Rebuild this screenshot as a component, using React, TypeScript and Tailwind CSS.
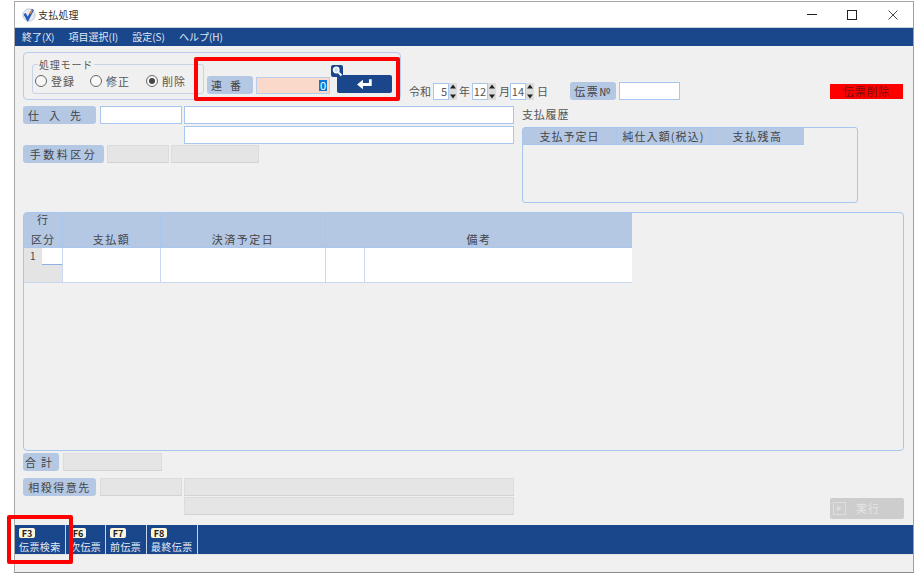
import React from "react";

const font = { fontFamily: '"Noto Sans CJK JP", "Liberation Sans", sans-serif' };

function Label({ children, className = "" }: { children: React.ReactNode; className?: string }) {
  return (
    <div className={`flex h-[18px] items-center justify-center rounded-[3px] bg-[#b4c8e4] text-[11px] leading-none text-[#444] ${className}`}>
      {children}
    </div>
  );
}

function Input({ className = "", disabled = false }: { className?: string; disabled?: boolean }) {
  return (
    <div
      className={`h-[18px] border ${
        disabled ? "border-[#dcdcdc] border-b-[#d2d2d2] bg-[#e5e5e5]" : "border-[#a9c6ee] bg-white"
      } ${className}`}
    />
  );
}

function Radio({ label, checked = false, className = "" }: { label: string; checked?: boolean; className?: string }) {
  return (
    <div className={`flex items-center gap-[4px] text-[11px] leading-none tracking-[1px] text-[#555] ${className}`}>
      <span className="flex h-[12px] w-[12px] items-center justify-center rounded-full border border-[#666] bg-[#f8f8f8]">
        {checked && <span className="h-[6px] w-[6px] rounded-full bg-[#444]" />}
      </span>
      {label}
    </div>
  );
}

function Spin() {
  return (
    <div className="flex h-[17px] w-[8px] flex-col bg-[#dcdcdc]">
      <svg viewBox="0 0 8 8" className="h-[8px] w-[8px]"><path d="M4 1.5 7 5.5H1Z" fill="#222" /></svg>
      <svg viewBox="0 0 8 8" className="mt-[1px] h-[8px] w-[8px]"><path d="M4 6.5 7 2.5H1Z" fill="#222" /></svg>
    </div>
  );
}

function NumBox({ value, className = "" }: { value: string; className?: string }) {
  return (
    <div className={`flex h-[17px] items-center justify-end border border-[#a9c6ee] bg-white pr-[1px] text-[11px] leading-none text-[#555] ${className}`}>
      {value}
    </div>
  );
}

function FKey({ k, label, className = "" }: { k: string; label: string; className?: string }) {
  return (
    <div className={`flex h-full flex-col items-start border-r border-[#c5d3e8] pl-[4px] pt-[3px] ${className}`}>
      <span className="flex h-[10px] w-[16px] items-center justify-center rounded-[2px] bg-[#fdf6dc] text-[9px] font-bold leading-none text-[#222]">
        {k}
      </span>
      <span className="mt-[2px] whitespace-nowrap text-[10px] leading-[13px] tracking-[0.4px] text-[#e6ecf6]">{label}</span>
    </div>
  );
}

export default function App() {
  return (
    <div className="relative h-[581px] w-[921px] overflow-hidden bg-white pl-[14px] pt-[1px]" style={font}>
      <div className="flex h-[572px] w-[900px] flex-col border border-[#a8a8a8] border-b-[#8a8a8a] border-r-[#a0a0a0] bg-[#f0f0f0]">
        {/* Title bar */}
        <div className="flex h-[26px] items-center border-b border-[#c8d0dc] bg-white pl-[7px]">
          <svg viewBox="0 0 16 16" className="h-[14px] w-[14px]">
            <circle cx="8" cy="8" r="7" fill="#e6e8f4" stroke="#b0b4cc" strokeWidth="0.8" />
            <path d="M3 6.5l3.5 6.5L12.5 1.5" fill="none" stroke="#2258b8" strokeWidth="2.8" />
            <path d="M9.5 6.5l2-4.5" stroke="#f09020" strokeWidth="1.6" />
          </svg>
          <span className="ml-[2px] text-[10px] leading-none tracking-[0.2px] text-[#333]">支払処理</span>
          <div className="ml-auto flex items-center pr-[15px]">
            <span className="h-px w-[10px] bg-[#222]" />
            <span className="ml-[30px] h-[10px] w-[10px] border border-[#222]" />
            <svg viewBox="0 0 10 10" className="ml-[31px] h-[10px] w-[10px]">
              <path d="M0.5 0.5 9.5 9.5M9.5 0.5 0.5 9.5" stroke="#333" strokeWidth="0.9" />
            </svg>
          </div>
        </div>
        {/* Menu */}
        <div className="flex h-[18px] items-center gap-[14px] bg-[#1a478c] pl-[7px] text-[10px] leading-none text-[#dfe7f3]">
          <span>終了(X)</span>
          <span>項目選択(I)</span>
          <span>設定(S)</span>
          <span>ヘルプ(H)</span>
        </div>

        {/* Body */}
        <div className="flex min-h-0 flex-1 flex-col pl-[8px] pr-[9px] pt-[6px]">
          {/* Top row */}
          <div className="flex items-end">
            <div className="relative flex h-[48px] w-[378px] shrink-0 items-end rounded-[4px] border border-[#b8cdea] pb-[5px] pl-[8px]">
              <fieldset className="h-[35px] w-[172px] rounded-[3px] border border-[#c8d4e4] pl-[2px]">
                <legend className="ml-[3px] px-[1px] text-[10px] leading-[11px] tracking-[0.8px] text-[#555]">処理モード</legend>
                <div className="mt-[5px] flex">
                  <Radio label="登録" className="w-[55px]" />
                  <Radio label="修正" className="w-[56px]" />
                  <Radio label="削除" checked />
                </div>
              </fieldset>
              <Label className="ml-[3px] h-[17px] w-[46px] tracking-[8px]">連番</Label>
              <div className="ml-[3px] flex h-[17px] w-[74px] items-center justify-end border border-[#b8cdea] bg-[#fad9cb] pr-[2px] text-[11px] leading-none">
                <span className="bg-[#0a78d7] px-px text-white">0</span>
              </div>
              <div className="relative mb-[1px] ml-[7px] flex h-[18px] w-[55px] items-center justify-center rounded-[2px] bg-[#1a478c]">
                <svg viewBox="0 0 16 12" className="h-[13px] w-[17px]">
                  <path d="M13.5 1v5H6" fill="none" stroke="#fff" strokeWidth="2.6" />
                  <path d="M1 6l5.5-4.5v9Z" fill="#fff" />
                </svg>
                <div className="absolute -left-[6px] -top-[10px] flex h-[12px] w-[12px] items-center justify-center rounded-[2px] bg-[#1a478c]">
                  <svg viewBox="0 0 12 12" className="h-[12px] w-[12px]">
                    <circle cx="5.2" cy="5" r="2.8" fill="#cfe0f6" stroke="#fff" strokeWidth="1.3" />
                    <path d="M7.5 7.5 10.5 10.5" stroke="#fff" strokeWidth="1.8" />
                  </svg>
                </div>
              </div>
            </div>

            <div className="flex items-center text-[11px] leading-none text-[#555]">
              <span className="ml-[8px] w-[24px] whitespace-nowrap">令和</span>
              <NumBox value="5" className="w-[16px]" />
              <Spin />
              <span className="ml-[2px] w-[13px]">年</span>
              <NumBox value="12" className="w-[16px]" />
              <Spin />
              <span className="ml-[3px] w-[11px]">月</span>
              <NumBox value="14" className="w-[16px]" />
              <Spin />
              <span className="ml-[3px] w-[12px]">日</span>
              <Label className="ml-[21px] h-[17px] w-[46px] whitespace-nowrap tracking-[1.5px]">伝票№</Label>
              <Input className="ml-[3px] h-[17px] w-[61px]" />
            </div>
            <div className="mb-px ml-auto mr-[1px] flex h-[15px] w-[73px] items-center justify-center bg-[#ff0000] text-[11px] leading-none tracking-[0.8px] text-[#7a1010]">
              伝票削除
            </div>
          </div>

          {/* Supplier + history */}
          <div className="mt-[6px] flex h-[100px]">
            <div className="w-[491px] shrink-0">
              <div className="flex">
                <Label className="w-[73px] tracking-[10px]">仕入先</Label>
                <Input className="ml-[4px] w-[82px]" />
                <Input className="ml-[2px] w-[330px]" />
              </div>
              <div className="mt-[2px] flex pl-[161px]">
                <Input className="w-[330px]" />
              </div>
              <div className="mt-px flex">
                <Label className="w-[81px] tracking-[2.5px]">手数料区分</Label>
                <Input disabled className="ml-[3px] w-[62px]" />
                <Input disabled className="ml-[2px] w-[88px]" />
              </div>
            </div>
            <div className="ml-[8px] flex h-[97px] w-[336px] flex-col">
              <div className="h-[21px] pt-[3px] text-[11px] leading-none tracking-[0.8px] text-[#555]">支払履歴</div>
              <div className="flex-1 rounded-[3px] border border-[#a9c6ee]">
                <div className="grid h-[17px] w-[281px] grid-cols-[94px_94px_93px] border-b border-[#a9c6ee] bg-[#b4c8e4] text-[11px] leading-none text-[#444]">
                  <div className="flex items-center justify-center border-r border-[#a9c6ee] tracking-[1px]">支払予定日</div>
                  <div className="flex items-center justify-center whitespace-nowrap border-r border-[#a9c6ee] tracking-[1.1px]">純仕入額(税込)</div>
                  <div className="flex items-center justify-center tracking-[1.5px]">支払残高</div>
                </div>
              </div>
            </div>
          </div>

          {/* Table panel */}
          <div className="mt-[6px] h-[239px] rounded-[4px] border border-[#a9c6ee]">
            <div className="grid w-[608px] grid-cols-[39px_98px_165px_39px_267px] grid-rows-[35px_35px] text-[10px] leading-none text-[#444]">
              <div className="flex flex-col items-center justify-end gap-[9px] border-b border-r border-[#a9c6ee] bg-[#b4c8e4] pb-[2px] text-[11px] tracking-[1px]">
                <span>行</span>
                <span>区分</span>
              </div>
              <div className="flex items-end justify-center border-b border-r border-[#a9c6ee] bg-[#b4c8e4] pb-[2px] text-[11px] tracking-[1.5px]">支払額</div>
              <div className="flex items-end justify-center border-b border-r border-[#a9c6ee] bg-[#b4c8e4] pb-[2px] text-[11px] tracking-[1.5px]">決済予定日</div>
              <div className="col-span-2 flex items-end justify-center border-b border-[#a9c6ee] bg-[#b4c8e4] pb-[2px] text-[11px] tracking-[1.5px]">備考</div>
              <div className="border-b border-r border-[#c8d8ee] bg-[#e4e4e4]">
                <div className="flex h-[17px]">
                  <span className="w-[18px] pl-[6px] pt-[3px] text-[10px]">1</span>
                  <div className="flex-1 border-b border-[#8fb2e4] bg-white" />
                </div>
              </div>
              <div className="border-b border-r border-[#c8d8ee] bg-white" />
              <div className="border-b border-r border-[#c8d8ee] bg-white" />
              <div className="border-b border-r border-[#c8d8ee] bg-white" />
              <div className="border-b border-[#c8d8ee] bg-white" />
            </div>
          </div>

          {/* Bottom fields */}
          <div className="mt-[2px] flex">
            <Label className="h-[17px] w-[36px] tracking-[5px]">合計</Label>
            <Input disabled className="ml-[4px] h-[17px] w-[99px]" />
          </div>
          <div className="mt-[7px] flex items-start">
            <div className="w-[491px] shrink-0">
              <div className="flex">
                <Label className="w-[73px] tracking-[1.5px]">相殺得意先</Label>
                <Input disabled className="ml-[4px] w-[82px]" />
                <Input disabled className="ml-[2px] w-[330px]" />
              </div>
              <div className="mt-px flex pl-[161px]">
                <Input disabled className="w-[330px]" />
              </div>
            </div>
            <div className="ml-auto mt-[20px] flex h-[21px] w-[74px] items-center rounded-[2px] bg-[#cdcdcd] pl-[3px] text-[11px] leading-none tracking-[1px] text-[#e6e6e6]">
              <span className="flex h-[13px] w-[13px] items-center justify-center border border-[#dedede]">
                <svg viewBox="0 0 8 8" className="h-[7px] w-[7px]"><path d="M1 0.5 7 4 1 7.5Z" fill="#dedede" /></svg>
              </span>
              <span className="ml-[10px]">実行</span>
            </div>
          </div>
          <div className="flex-1" />
        </div>

        {/* Function key bar */}
        <div className="flex h-[29px] bg-[#1a478c]">
          <FKey k="F3" label="伝票検索" className="w-[51px]" />
          <FKey k="F6" label="次伝票" className="w-[40px]" />
          <FKey k="F7" label="前伝票" className="w-[41px]" />
          <FKey k="F8" label="最終伝票" className="w-[51px]" />
        </div>
        <div className="h-[18px] border-t border-[#e4e4e4]" />
      </div>

      {/* Annotation frames */}
      <div className="absolute left-[194px] top-[57px] h-[44px] w-[206px] rounded-[2px] border-[4px] border-[#ff0000]" />
      <div className="absolute left-[7px] top-[515px] h-[49px] w-[66px] rounded-[2px] border-[4px] border-[#ff0000]" />
    </div>
  );
}
